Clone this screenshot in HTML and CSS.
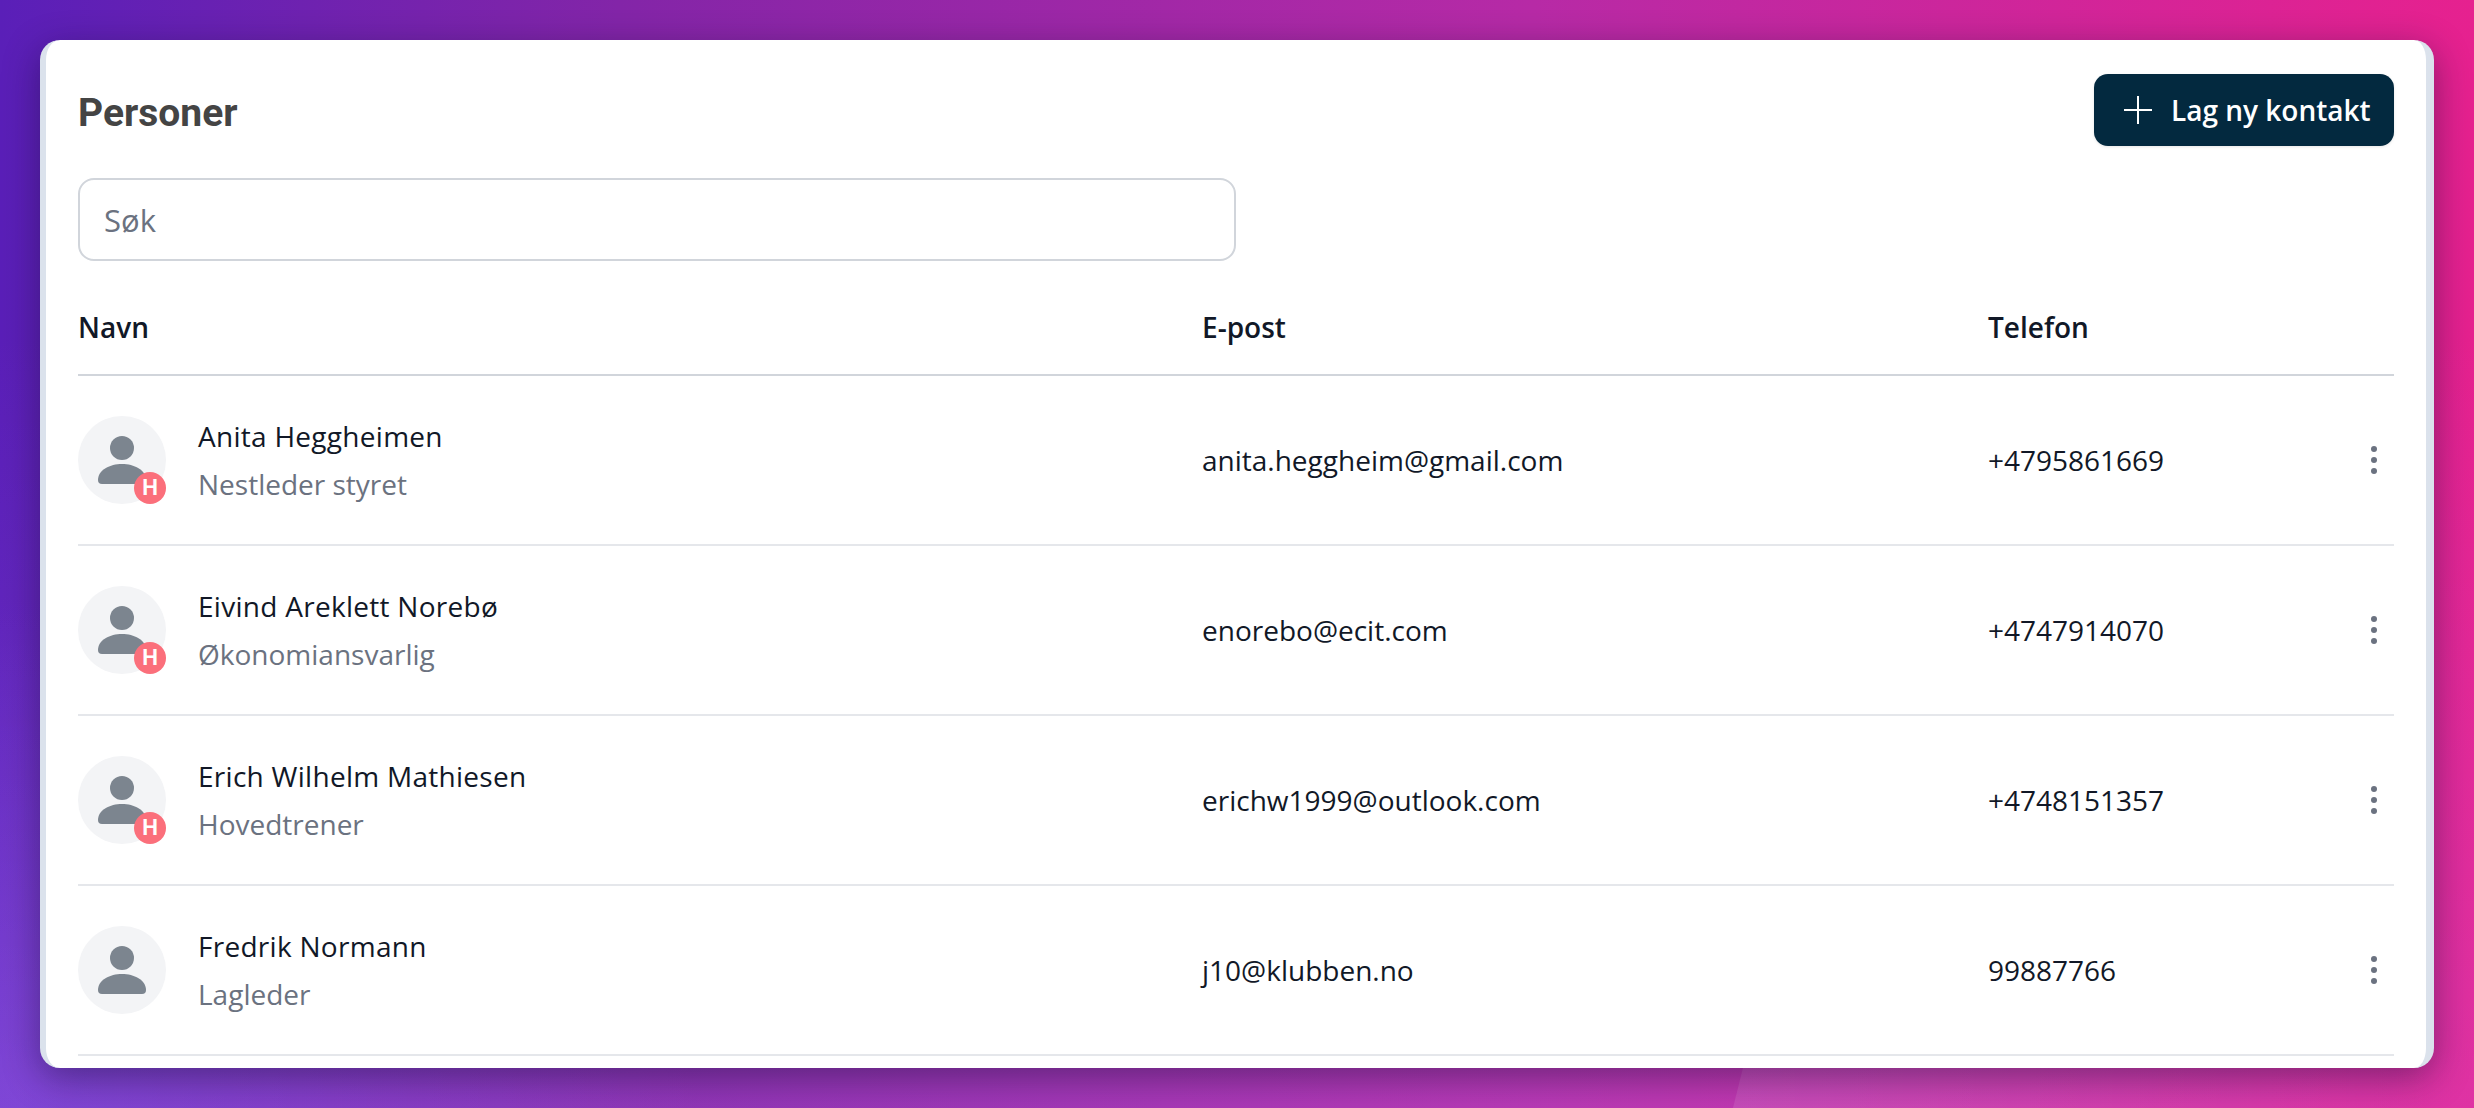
FILE: index.html
```html
<!DOCTYPE html>
<html lang="no">
<head>
<meta charset="utf-8">
<title>Personer</title>
<link rel="stylesheet" href="styles.css">
</head>
<body>
<main class="card">
  <header class="top">
    <h1 class="title">Personer</h1>
    <button class="add" type="button">
      <svg class="plus" width="28" height="28" viewBox="0 0 28 28"><path d="M14 0V28M0 14H28" stroke="#fff" stroke-width="2" stroke-linecap="round"/></svg>
      Lag ny kontakt
    </button>
  </header>
  <input class="search" type="text" placeholder="Søk">
  <div class="row head"><div>Navn</div><div>E-post</div><div>Telefon</div></div>

  <div class="row person">
    <div class="who">
      <div class="avatar">
        <svg width="88" height="88" viewBox="0 0 88 88"><circle cx="44" cy="44" r="44" fill="#f3f4f6"/><circle cx="44" cy="32" r="12" fill="#7c858f"/><path d="M20 64C20 54 32 48 44 48S68 54 68 64Q68 68 64 68H24Q20 68 20 64Z" fill="#7c858f"/></svg>
        <span class="badge">H</span>
      </div>
      <div><div class="name">Anita Heggheimen</div><div class="role">Nestleder styret</div></div>
    </div>
    <div>anita.heggheim@gmail.com</div>
    <div>+4795861669</div>
    <svg class="more" width="6" height="28" viewBox="0 0 6 28"><circle cx="3" cy="3" r="3"/><circle cx="3" cy="14" r="3"/><circle cx="3" cy="25" r="3"/></svg>
  </div>

  <div class="row person">
    <div class="who">
      <div class="avatar">
        <svg width="88" height="88" viewBox="0 0 88 88"><circle cx="44" cy="44" r="44" fill="#f3f4f6"/><circle cx="44" cy="32" r="12" fill="#7c858f"/><path d="M20 64C20 54 32 48 44 48S68 54 68 64Q68 68 64 68H24Q20 68 20 64Z" fill="#7c858f"/></svg>
        <span class="badge">H</span>
      </div>
      <div><div class="name">Eivind Areklett Norebø</div><div class="role">Økonomiansvarlig</div></div>
    </div>
    <div>enorebo@ecit.com</div>
    <div>+4747914070</div>
    <svg class="more" width="6" height="28" viewBox="0 0 6 28"><circle cx="3" cy="3" r="3"/><circle cx="3" cy="14" r="3"/><circle cx="3" cy="25" r="3"/></svg>
  </div>

  <div class="row person">
    <div class="who">
      <div class="avatar">
        <svg width="88" height="88" viewBox="0 0 88 88"><circle cx="44" cy="44" r="44" fill="#f3f4f6"/><circle cx="44" cy="32" r="12" fill="#7c858f"/><path d="M20 64C20 54 32 48 44 48S68 54 68 64Q68 68 64 68H24Q20 68 20 64Z" fill="#7c858f"/></svg>
        <span class="badge">H</span>
      </div>
      <div><div class="name">Erich Wilhelm Mathiesen</div><div class="role">Hovedtrener</div></div>
    </div>
    <div>erichw1999@outlook.com</div>
    <div>+4748151357</div>
    <svg class="more" width="6" height="28" viewBox="0 0 6 28"><circle cx="3" cy="3" r="3"/><circle cx="3" cy="14" r="3"/><circle cx="3" cy="25" r="3"/></svg>
  </div>

  <div class="row person">
    <div class="who">
      <div class="avatar">
        <svg width="88" height="88" viewBox="0 0 88 88"><circle cx="44" cy="44" r="44" fill="#f3f4f6"/><circle cx="44" cy="32" r="12" fill="#7c858f"/><path d="M20 64C20 54 32 48 44 48S68 54 68 64Q68 68 64 68H24Q20 68 20 64Z" fill="#7c858f"/></svg>
      </div>
      <div><div class="name">Fredrik Normann</div><div class="role">Lagleder</div></div>
    </div>
    <div>j10@klubben.no</div>
    <div>99887766</div>
    <svg class="more" width="6" height="28" viewBox="0 0 6 28"><circle cx="3" cy="3" r="3"/><circle cx="3" cy="14" r="3"/><circle cx="3" cy="25" r="3"/></svg>
  </div>
</main>
</body>
</html>
```
FILE: styles.css
```css
* { box-sizing: border-box; }
html, body { height: 100%; }
body {
  margin: 0;
  padding: 40px;
  overflow: hidden;
  position: relative;
  font-family: "Open Sans", sans-serif;
  color: #111827;
  background:
    radial-gradient(700px 500px at 0 1108px, rgba(170,120,255,.3), rgba(170,120,255,0)),
    linear-gradient(180deg, rgba(255,255,255,0) 0%, rgba(255,255,255,0) 30%, rgba(190,130,255,.18) 100%),
    linear-gradient(90deg, #5a1fb8 0%, #8325a8 25%, #b72aa6 62%, #e6218f 100%);
}
body::before {
  content: "";
  position: absolute;
  inset: 0;
  background: linear-gradient(90deg, rgba(255,255,255,.1) 1733px, rgba(255,255,255,0) 2440px);
  clip-path: polygon(1745px 1060px, 2474px 1060px, 2474px 1108px, 1733px 1108px);
}
.card {
  position: relative;
  height: 1028px;
  padding: 34px 32px 0;
  background: #fff;
  border-left: 6px solid #dbe2ec;
  border-right: 8px solid #dbe2ec;
  border-radius: 20px;
  overflow: hidden;
  box-shadow: 0 10px 36px rgba(20, 10, 50, .45);
}
.top {
  display: flex;
  justify-content: space-between;
  align-items: center;
  height: 72px;
}
.title {
  margin: 6px 0 0;
  font: 700 39px/44px Roboto, sans-serif;
  color: #444;
}
.add {
  display: flex;
  align-items: center;
  gap: 19px;
  width: 300px;
  height: 72px;
  padding: 0 0 0 30px;
  border: 0;
  border-radius: 14px;
  background: #03293f;
  color: #fff;
  font: 600 28px/36px "Open Sans", sans-serif;
  box-shadow: 0 1px 3px rgba(0,0,0,.1);
}
.search {
  display: block;
  width: 1158px;
  height: 83px;
  margin-top: 32px;
  padding: 0 24px;
  border: 2px solid #d1d5db;
  border-radius: 16px;
  font: 400 31px/40px "Open Sans", sans-serif;
  color: #111827;
}
.search::placeholder { color: #6b7280; opacity: 1; }
.row {
  display: grid;
  grid-template-columns: 1124px 786px 1fr 6px;
  align-items: center;
  font-size: 28px;
  line-height: 38px;
}
.head {
  height: 115px;
  padding-top: 18px;
  border-bottom: 2px solid #d1d5db;
  font-weight: 600;
}
.person {
  height: 170px;
  border-bottom: 2px solid #e5e7eb;
  padding-right: 17px;
}
.who { display: flex; align-items: center; gap: 32px; }
.avatar { position: relative; width: 88px; height: 88px; flex: none; }
.avatar svg { display: block; }
.badge {
  position: absolute;
  left: 56px;
  top: 56px;
  width: 32px;
  height: 32px;
  border-radius: 50%;
  background: #fb6f7b;
  color: #fff;
  font: 700 21px/32px Inter, sans-serif;
  text-align: center;
}
.name { line-height: 38px; font-weight: 500; letter-spacing: .28px; }
.role { margin-top: 10px; color: #6b7280; line-height: 38px; }
.more { fill: #6b7280; display: block; }
```
